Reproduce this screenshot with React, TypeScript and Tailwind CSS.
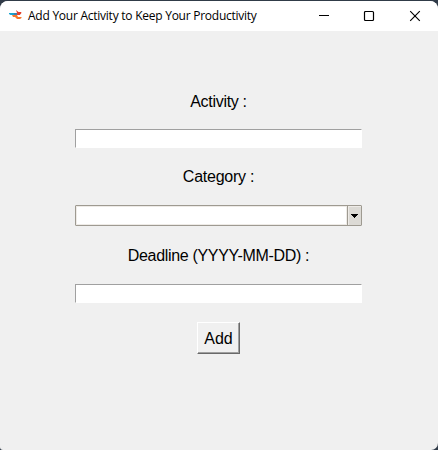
const entry =
  "block h-[19px] w-[287px] border-l border-t border-b border-r border-l-[#a0a0a0] border-t-[#a0a0a0] border-b-white border-r-white bg-white px-1 text-sm outline-none";
const label = "block h-6 whitespace-nowrap text-[16px] leading-6";

function Logo() {
  return (
    <svg width="14" height="12" viewBox="0 0 14 12" className="shrink-0">
      <path d="M0 3H8V5H1.5L0 4Z" fill="#16a3cf" />
      <path d="M5 3H8V5H5Z" fill="#3f7fae" />
      <path d="M7 0L9.5 2H12.3V3.2L10.8 5H8V3Z" fill="#e2402d" />
      <path d="M3 5H8L9 7H12.5V8L11 9H8L6 7H4Z" fill="#f6772a" />
    </svg>
  );
}

function TitleBar() {
  return (
    <header className="flex h-[30px] shrink-0 items-center bg-white pl-[9px]">
      <Logo />
      <h1 className="ml-[5px] grow whitespace-nowrap font-['Open_Sans',sans-serif] text-[12px] leading-4 tracking-[-0.25px]">
        Add Your Activity to Keep Your Productivity
      </h1>
      <div className="flex shrink-0">
        <button aria-label="Minimize" className="flex h-[30px] w-[46px] items-center justify-center">
          <svg width="12" height="12" viewBox="0 0 12 12"><path d="M1 5.5H11" stroke="#000" /></svg>
        </button>
        <button aria-label="Maximize" className="flex h-[30px] w-[45px] items-center justify-center pr-px">
          <svg width="12" height="12" viewBox="0 0 12 12"><rect x="1.5" y="1.5" width="9" height="9" rx="1" fill="none" stroke="#000" strokeWidth="1.2" /></svg>
        </button>
        <button aria-label="Close" className="flex h-[30px] w-[46px] items-center justify-center">
          <svg width="12" height="12" viewBox="0 0 12 12"><path d="M1.2 1.2L10.8 10.8M10.8 1.2L1.2 10.8" stroke="#000" strokeWidth="1.15" /></svg>
        </button>
      </div>
    </header>
  );
}

export default function App() {
  return (
    <div className="h-[450px] w-[438px] overflow-hidden bg-[#303b48] pt-px text-black">
      <div className="flex h-[449px] flex-col overflow-hidden rounded-t-[8px] rounded-bl-[3px] rounded-br-[7px] bg-[#f0f0f0]">
        <TitleBar />
        <main className="flex grow flex-col items-center pr-px pt-[59px] font-['Liberation_Sans',Arial,sans-serif]">
          <label htmlFor="activity" className={`${label} tracking-[-0.3px]`}>Activity :</label>
          <input id="activity" className={`${entry} mt-[15px]`} />
          <label htmlFor="category" className={`${label} mt-[17px] tracking-[-0.25px]`}>Category :</label>
          <div className="mt-4 flex h-[21px] w-[287px] rounded-[1px] border border-[#9e9a91]">
            <input id="category" className="h-full min-w-0 grow border border-[#eeebe7] bg-white px-1 text-sm outline-none" />
            <button aria-label="Show categories" className="flex w-[14px] items-center justify-center border-l border-[#9e9a91] bg-[#dcdad5] shadow-[inset_1px_1px_0_#eeebe7]">
              <svg width="7" height="4" viewBox="0 0 7 4" shapeRendering="crispEdges"><path d="M0 0H7V1H6V2H5V3H4V4H3V3H2V2H1V1H0Z" /></svg>
            </button>
          </div>
          <label htmlFor="deadline" className={`${label} mt-[18px] tracking-[-0.32px]`}>Deadline (YYYY-MM-DD) :</label>
          <input id="deadline" className={`${entry} mt-4`} />
          <button className="mt-[19px] h-8 w-[43px] border border-l-white border-t-white border-b-[#696969] border-r-[#696969] bg-[#f0f0f0] pt-px text-[16px] leading-[29px] shadow-[inset_-1px_-1px_0_#a0a0a0]">
            Add
          </button>
        </main>
      </div>
    </div>
  );
}
